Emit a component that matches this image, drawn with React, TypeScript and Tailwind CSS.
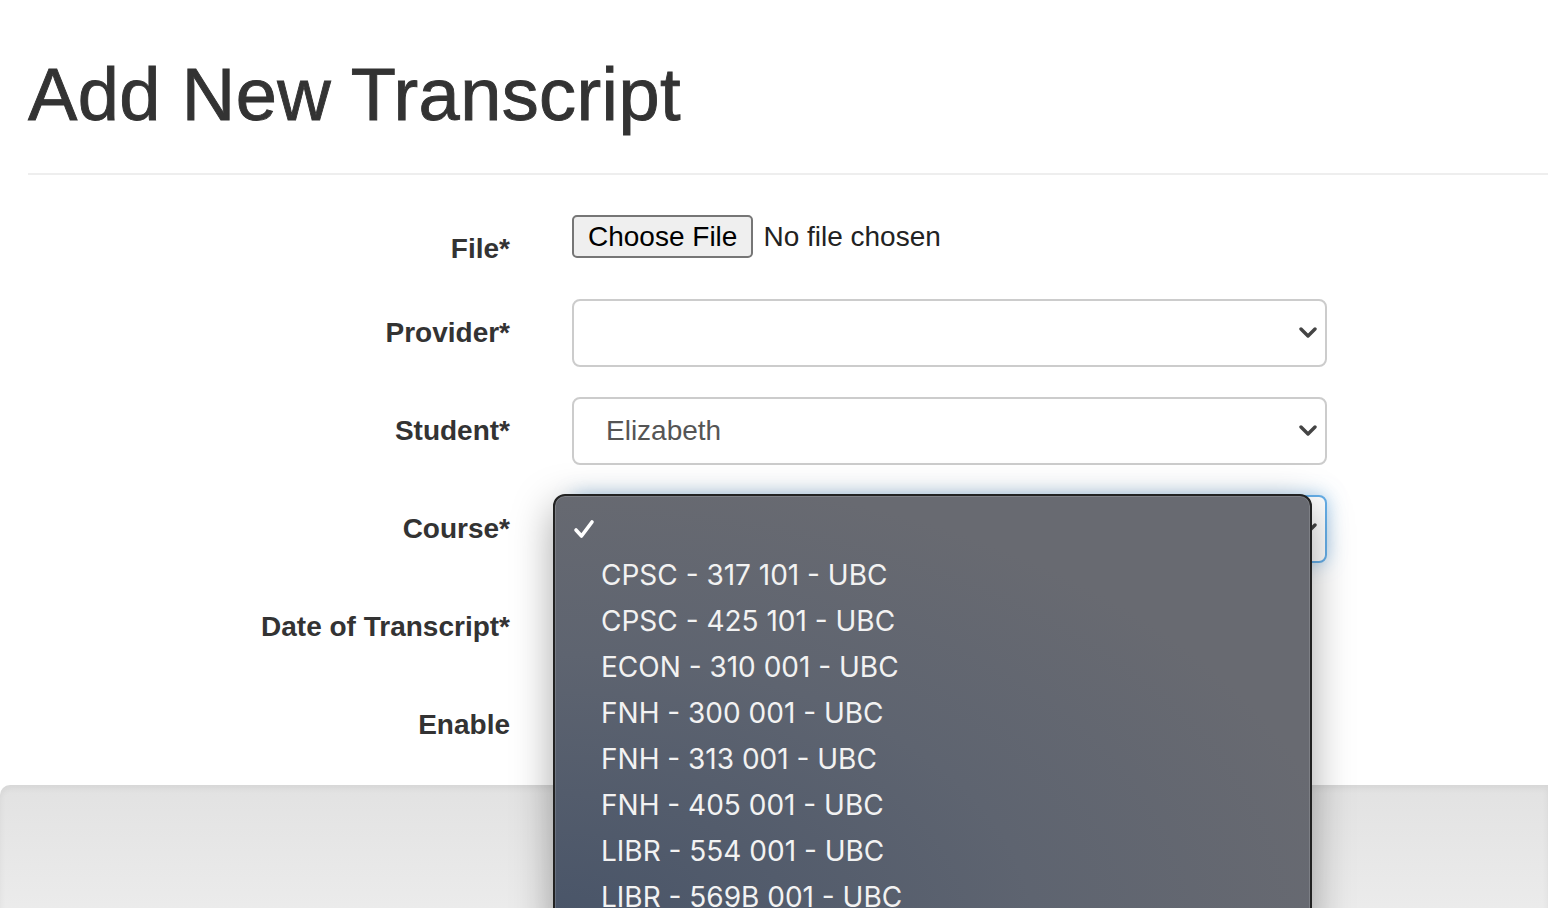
const courses = [
  'CPSC - 317 101 - UBC',
  'CPSC - 425 101 - UBC',
  'ECON - 310 001 - UBC',
  'FNH - 300 001 - UBC',
  'FNH - 313 001 - UBC',
  'FNH - 405 001 - UBC',
  'LIBR - 554 001 - UBC',
  'LIBR - 569B 001 - UBC',
  'LIBR - 580 001 - UBC',
];

function Chevron() {
  return (
    <svg width="18" height="12" viewBox="0 0 18 12" className="shrink-0">
      <polyline points="2,2 9,9 16,2" fill="none" stroke="#444" strokeWidth="3.4" strokeLinecap="round" strokeLinejoin="round" />
    </svg>
  );
}

function SelectBox({ value, focused }: { value?: string; focused?: boolean }) {
  return (
    <div
      className={
        focused
          ? 'flex h-[68px] w-[755px] items-center justify-between rounded-[8px] border-2 border-[#66afe9] bg-white pl-[32px] pr-[8px] shadow-[0_0_18px_rgba(102,175,233,0.55)]'
          : 'flex h-[68px] w-[755px] items-center justify-between rounded-[8px] border-2 border-[#cccccc] bg-white pl-[32px] pr-[8px]'
      }
    >
      <span className="text-[28px] text-[#555555]">{value}</span>
      <Chevron />
    </div>
  );
}

function Row({ label, children }: { label: string; children?: React.ReactNode }) {
  return (
    <div className="mb-[30px] flex items-start">
      <label className="w-[482px] shrink-0 pt-[14px] text-right text-[28px] font-bold leading-[40px] text-[#333333]">
        {label}
      </label>
      <div className="relative ml-[62px]">{children}</div>
    </div>
  );
}

function CourseMenu() {
  return (
    <div className="absolute left-[-19px] top-[-1px] z-10 h-[440px] w-[759px] overflow-hidden rounded-t-[12px] border-2 border-[#222222] bg-[radial-gradient(ellipse_at_0%_100%,#485468_0%,#5e6470_45%,#686a71_75%)] shadow-[0_12px_40px_rgba(0,0,0,0.35)]">
      <div className="h-full rounded-t-[10px] border border-white/15 pt-[9px] font-['Inter',sans-serif] text-[28px] text-[#f2f2f2]">
        <div className="flex h-[46px] items-center pl-[17px]">
          <svg width="22" height="20" viewBox="0 0 22 20">
            <polyline points="3,11 8.5,17 19,3" fill="none" stroke="#ffffff" strokeWidth="3.6" strokeLinecap="round" strokeLinejoin="round" />
          </svg>
        </div>
        {courses.map((c) => (
          <div key={c} className="flex h-[46px] items-center pl-[45px]">
            {c}
          </div>
        ))}
      </div>
    </div>
  );
}

export default function App() {
  return (
    <div className="h-[908px] overflow-hidden bg-white font-['Liberation_Sans',Arial,sans-serif] text-[#333333]">
      <div className="pl-[28px]">
        <h1 className="pt-[54px] text-[74px] leading-[81px] tracking-[0.4px] text-[#333333] [-webkit-text-stroke:0.9px_#333333]">
          Add New Transcript
        </h1>
        <div className="mt-[38px] h-[2px] bg-[#eeeeee]" />
      </div>

      <div className="pl-[28px] pt-[40px]">
        <Row label="File*">
          <div className="flex items-center">
            <div className="flex h-[43px] items-center rounded-[5px] border-2 border-[#767676] bg-[#efefef] px-[14px] text-[28px] text-black">
              Choose File
            </div>
            <span className="ml-[10px] text-[28px] text-[#222222]">No file chosen</span>
          </div>
        </Row>
        <Row label="Provider*">
          <SelectBox />
        </Row>
        <Row label="Student*">
          <SelectBox value="Elizabeth" />
        </Row>
        <Row label="Course*">
          <SelectBox focused />
          <CourseMenu />
        </Row>
        <Row label="Date of Transcript*">
          <div className="h-[68px] w-[755px]" />
        </Row>
        <Row label="Enable">
          <div className="h-[34px] w-[26px]" />
        </Row>
      </div>

      <div className="mt-[40px] h-[200px] rounded-tl-[10px] bg-gradient-to-b from-[#e2e2e2] to-[#f1f1f1] shadow-[inset_0_3px_6px_rgba(0,0,0,0.06)]" />
    </div>
  );
}
